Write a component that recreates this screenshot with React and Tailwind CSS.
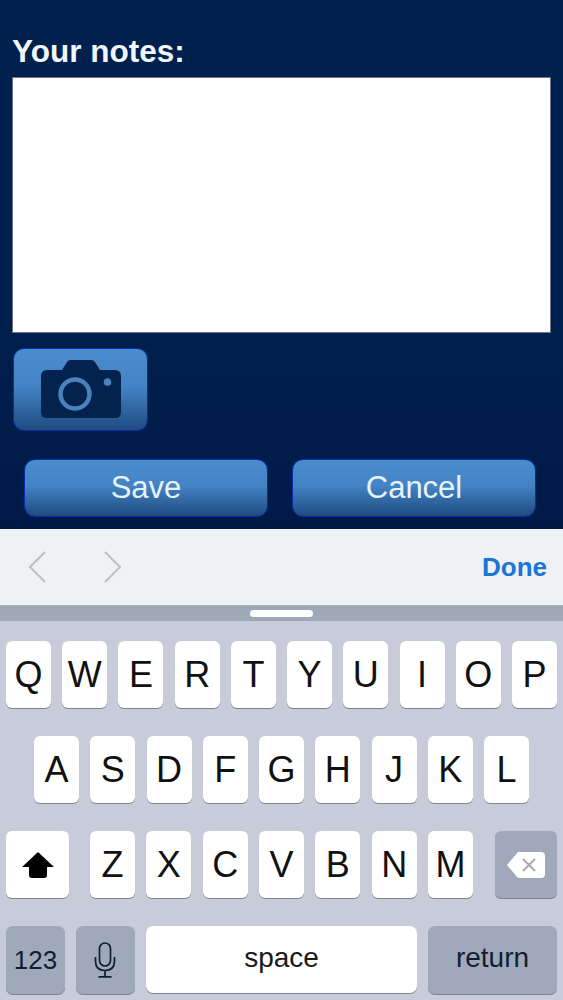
const font = "font-['Liberation_Sans',Arial,sans-serif]";
const row1 = ["Q","W","E","R","T","Y","U","I","O","P"];
const row2 = ["A","S","D","F","G","H","J","K","L"];
const row3 = ["Z","X","C","V","B","N","M"];

function Key({ children }) {
  return (
    <div className="flex h-[67px] w-[45px] items-center justify-center rounded-[6px] bg-white text-[36px] leading-none text-[#111111] shadow-[0_1px_0_#7f838e]">
      {children}
    </div>
  );
}

function BlueButton({ children }) {
  return (
    <button className="flex h-[58px] w-[244px] items-center justify-center rounded-[11px] border border-[#0a2cac] bg-[linear-gradient(#4a8ccd_0%,#4484c6_45%,#2f659f_75%,#1f4a80_100%)] text-[31px] text-[#e6f3fb]">
      {children}
    </button>
  );
}

export default function App() {
  return (
    <div className={`${font} flex h-[1000px] w-[563px] flex-col overflow-hidden bg-[#00204d]`}>
      <div className="flex h-[529px] flex-col bg-[linear-gradient(#00214e_0%,#00204d_60%,#001a48_100%)]">
        <div className="pl-3 pt-[33px] text-[31.5px] font-bold leading-[36px] text-[#f2f6fa]">Your notes:</div>
        <div className="ml-3 mt-[8px] h-[256px] w-[539px] border border-[#6d7385] bg-white" />
        <button className="ml-[13px] mt-[15px] flex h-[83px] w-[135px] items-center justify-center rounded-[11px] border border-[#0a2cac] bg-[linear-gradient(#4a8ccd_0%,#4484c6_45%,#2f659f_75%,#1f4a80_100%)]">
          <svg width="82" height="60" viewBox="0 0 82 60" className="-mt-[1px] mr-[-1px]">
            <path d="M5 11 H22 L27 3 Q28 1 31 1 H51 Q54 1 55 3 L60 11 H75 Q81 11 81 17 V53 Q81 59 75 59 H7 Q1 59 1 53 V17 Q1 11 7 11 Z" fill="#03224d" />
            <circle cx="35" cy="35" r="14.5" fill="none" stroke="#4a82bb" strokeWidth="4.5" />
            <circle cx="67.5" cy="23" r="3.8" fill="#4a82bb" />
          </svg>
        </button>
        <div className="ml-6 mt-[28px] flex w-[512px] justify-between">
          <BlueButton>Save</BlueButton>
          <BlueButton>Cancel</BlueButton>
        </div>
      </div>

      <div className="flex h-[76px] items-center justify-between bg-[#eff1f4] pl-[28px] pr-[16px]">
        <div className="flex gap-[58px]">
          <svg width="18" height="32" viewBox="0 0 18 32" fill="none" stroke="#bcbfc4" strokeWidth="2">
            <path d="M17 1 L2 16 L17 31" />
          </svg>
          <svg width="18" height="32" viewBox="0 0 18 32" fill="none" stroke="#bcbfc4" strokeWidth="2">
            <path d="M1 1 L16 16 L1 31" />
          </svg>
        </div>
        <span className="text-[26px] font-bold text-[#1b74d8]">Done</span>
      </div>

      <div className="flex h-[16px] items-center justify-center border-t border-[#aeb5c1] bg-[#9fa8b6]">
        <div className="h-[7px] w-[63px] rounded-full bg-white" />
      </div>

      <div className="flex flex-1 flex-col bg-[#c8ccda] pt-[20px]">
        <div className="flex justify-between pl-[6px] pr-[6px]">
          {row1.map((k) => <Key key={k}>{k}</Key>)}
        </div>
        <div className="mt-[28px] flex justify-between pl-[34px] pr-[34px]">
          {row2.map((k) => <Key key={k}>{k}</Key>)}
        </div>
        <div className="mt-[28px] flex pl-[6px] pr-[6px]">
          <div className="flex h-[67px] w-[63px] items-center justify-center rounded-[6px] bg-white shadow-[0_1px_0_#7f838e]">
            <svg width="34" height="28" viewBox="0 0 34 28">
              <path d="M17 1 L33 16 H26 V24 Q26 27 23 27 H11 Q8 27 8 24 V16 H1 Z" fill="#000" />
            </svg>
          </div>
          <div className="ml-[21px] flex w-[383px] justify-between">
            {row3.map((k) => <Key key={k}>{k}</Key>)}
          </div>
          <div className="ml-auto flex h-[67px] w-[62px] items-center justify-center rounded-[6px] bg-[#9fa9b9] shadow-[0_1px_0_#7f838e]">
            <svg width="40" height="30" viewBox="0 0 40 30">
              <path d="M12 2 H35 Q39 2 39 6 V24 Q39 28 35 28 H12 L1 15 Z" fill="#fff" />
              <path d="M17 9 L29 21 M29 9 L17 21" stroke="#a5abb7" strokeWidth="2" />
            </svg>
          </div>
        </div>
        <div className="mt-[28px] flex pl-[6px] pr-[6px]">
          <div className="flex h-[68px] w-[59px] items-center justify-center rounded-[7px] bg-[#9fa9b9] text-[26px] text-[#0f1e33] shadow-[0_1px_0_#7f838e]">123</div>
          <div className="ml-[11px] flex h-[68px] w-[59px] items-center justify-center rounded-[7px] bg-[#9fa9b9] pr-[2px] shadow-[0_1px_0_#7f838e]">
            <svg width="22" height="36" viewBox="0 0 22 36" fill="none" stroke="#0f1e33" strokeWidth="1.7">
              <rect x="5.5" y="1" width="11" height="23" rx="5.5" />
              <path d="M1.5 15 V19 Q1.5 28.5 11 28.5 Q20.5 28.5 20.5 19 V15 M11 28.5 V34.5 M4.5 34.8 H17.5" />
            </svg>
          </div>
          <div className="ml-[11px] flex h-[67px] w-[271px] items-center justify-center rounded-[7px] bg-white pb-[4px] text-[28px] text-[#1a1a1a] shadow-[0_1px_0_#7f838e]">space</div>
          <div className="ml-[11px] flex h-[68px] w-[129px] items-center justify-center rounded-[7px] bg-[#9fa9b9] pb-[4px] text-[28px] text-[#0f1e33] shadow-[0_1px_0_#7f838e]">return</div>
        </div>
      </div>
    </div>
  );
}
